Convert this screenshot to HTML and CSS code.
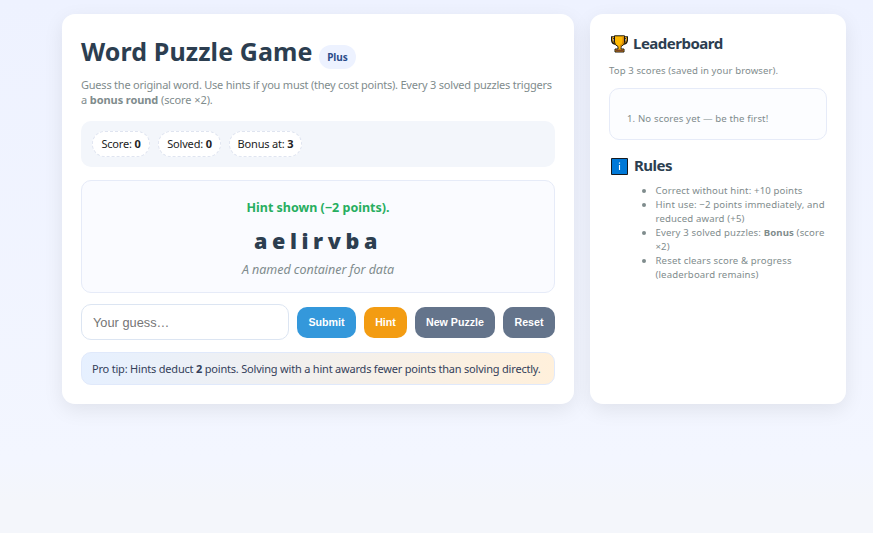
FILE: index.html
```html
<!DOCTYPE html>
<html lang="en">
<head>
<meta charset="utf-8">
<title>Word Puzzle Game</title>
<link rel="stylesheet" href="styles.css">
</head>
<body>
<div class="wrap">
  <main class="card game">
    <header class="title"><h1>Word Puzzle Game</h1><span class="badge">Plus</span></header>
    <p class="intro"><span class="intro-a">Guess the original word. Use hints if you must (they cost points). Every 3 solved puzzles triggers</span><br>a <strong>bonus round</strong> (score ×2).</p>
    <div class="stats">
      <div class="chip chip-score">Score: <strong>0</strong></div>
      <div class="chip chip-solved">Solved: <strong>0</strong></div>
      <div class="chip chip-bonus">Bonus at: <strong>3</strong></div>
    </div>
    <section class="puzzle">
      <div class="message">Hint shown (−2 points).</div>
      <div class="word">aelirvba</div>
      <div class="hint">A named container for data</div>
    </section>
    <div class="controls">
      <input class="guess" type="text" placeholder="Your guess…">
      <button class="btn submit">Submit</button>
      <button class="btn reveal">Hint</button>
      <button class="btn next">New Puzzle</button>
      <button class="btn reset">Reset</button>
    </div>
    <div class="tip">Pro tip: Hints deduct <strong>2</strong> points. Solving with a hint awards fewer points than solving directly.</div>
  </main>
  <aside class="card side">
    <h2><svg class="icon" width="17" height="18" viewBox="0 0 17 18"><path d="M4 2.500H1.200v3Q1.400 8.600 5 8.800M13 2.500h2.800v3Q15.600 8.600 12 8.800" fill="none" stroke="#1b1710" stroke-width="2.400"/><path d="M4 2.500H1.500v3Q1.800 7.800 5 8.200M13 2.500h2.500v3Q15.200 7.800 12 8.200" fill="none" stroke="#d99b16" stroke-width="1"/><path d="M3.500.8h10V7q0 3-3.500 4.500V14h3v3H4v-3h3v-2.500Q3.500 10 3.500 7z" fill="#ffb900" stroke="#1b1710"/><path d="M11.500 1.300H13V7q0 2.500-3.200 4v2.500H8.800V10q2.700-1 2.700-4z" fill="#d98a0b"/><path d="M4.800 14.500h7.400v2H4.800z" fill="#7a4328"/></svg><span class="h2-lead">Leaderboard</span></h2>
    <p class="note">Top 3 scores (saved in your browser).</p>
    <div class="scores">1. No scores yet — be the first!</div>
    <h2 class="h2-second"><svg class="icon" width="17" height="17" viewBox="0 0 17 17"><path d="M.5.5h16v16H.5z" fill="#0078d7" stroke="#151a20"/><path d="M8.500 7v5" stroke="#fff" stroke-width="1.100"/><path d="M7.900 4.500h1.200v1.200H7.900z" fill="#fff"/></svg><span class="h2-rules">Rules</span></h2>
    <ul class="rules">
      <li>Correct without hint: +10 points</li>
      <li>Hint use: −2 points immediately, and<br>reduced award (+5)</li>
      <li>Every 3 solved puzzles: <strong>Bonus</strong> (score<br>×2)</li>
      <li>Reset clears score &amp; progress<br>(leaderboard remains)</li>
    </ul>
  </aside>
</div>
</body>
</html>
```
FILE: styles.css
```css
* { box-sizing: border-box; }
html { height: 100%; overflow: hidden; }
body {
  height: 100%;
  margin: 0;
  padding: 14px 27px 0 62px;
  font-family: "Noto Sans", "Open Sans", sans-serif;
  color: #2c3e50;
  background: linear-gradient(180deg, #eef2ff 0%, #f3f6ff 86%, #f4f6fb 94%, #f4f6fb 100%);
  white-space: nowrap;
}
h1, h2, p, ul { margin: 0; }
.wrap { display: grid; grid-template-columns: 512px 256px; gap: 16px; }
.card {
  height: 390px;
  padding: 19px;
  background: #fff;
  border-radius: 13px;
  box-shadow: 0 6px 20px rgba(0, 0, 0, .08);
}
.title { display: flex; height: 44px; gap: 7px; }
h1 { width: 231px; font-size: 25px; line-height: 37px; letter-spacing: .1px; }
.badge {
  width: 37px; height: 24px; margin-top: 12px;
  border-radius: 12px; background: #edf2ff; color: #2b4c8a;
  font-size: 10px; font-weight: 700; line-height: 25px; text-align: center;
}
.intro { height: 44px; font-size: 11px; line-height: 15px; letter-spacing: -.09px; color: #7f8c8d; }
.intro-a { letter-spacing: -.22px; }
.stats {
  display: flex; gap: 8px; height: 46px; padding: 10px 11px;
  background: #f3f6fb; border-radius: 10px;
}
.chip {
  height: 26px; line-height: 24px; text-align: center; font-size: 11px; letter-spacing: -.18px; color: #222;
  background: #fff; border: 1px dashed #dfe4f0; border-radius: 13px;
}
.chip-score { width: 58px; }
.chip-solved { width: 63px; }
.chip-bonus { width: 73px; }
.puzzle {
  height: 113px; margin-top: 13px; padding-top: 17px; text-align: center;
  background: #fafbff; border: 1px solid #e6ebf8; border-radius: 10px;
}
.message { font-size: 12.500px; line-height: 20px; font-weight: 700; color: #27ae60; }
.word { margin-top: 7px; height: 34px; line-height: 32px; font-size: 21.500px; font-weight: 900; letter-spacing: 4.600px; }
.hint { margin-top: 1px; font-size: 12.500px; line-height: 20px; letter-spacing: -.04px; font-style: italic; color: #7f8c8d; }
.controls { display: flex; align-items: center; gap: 8px; height: 36px; margin-top: 11px; }
.guess {
  width: 208px; height: 36px; padding: 0 11px; border: 1px solid #dce5f2; border-radius: 10px;
  background: #fff; font: 12.800px "Liberation Sans", Arial, sans-serif;
}
.guess::placeholder { color: #757575; }
.btn {
  height: 31px; padding: 0; border: 0; border-radius: 10px; color: #fff;
  font: bold 10.670px "Liberation Sans", Arial, sans-serif;
}
.submit { width: 59px; background: #3498db; }
.reveal { width: 43px; background: #f39c12; }
.next { width: 80px; background: #64748b; }
.reset { width: 52px; background: #64748b; }
.tip {
  height: 33px; margin-top: 12px; padding-left: 10px; line-height: 31px; font-size: 11px; letter-spacing: -.2px; color: #34405a;
  background: linear-gradient(90deg, #e6f0ff, #fff0db); border: 1px solid #e0e9fb; border-radius: 10px;
}
h2 { display: flex; align-items: center; gap: 5px; height: 22px; padding-left: 2px; font-size: 15px; line-height: 20px; }
h2 span { letter-spacing: -.5px; padding-bottom: 2px; }
.icon { display: block; flex: none; }
.note { margin-top: 8px; font-size: 9.600px; line-height: 16px; letter-spacing: .09px; color: #7f8c8d; }
.scores {
  height: 52px; margin-top: 9px; padding: 22px 17px 0; font-size: 9.600px; line-height: 16px; letter-spacing: .13px; color: #7f8c8d;
  background: #fcfdff; border: 1px solid #e6ebf8; border-radius: 10px;
}
.h2-second { margin-top: 15px; gap: 6px; }
.rules { margin-top: 7px; padding-left: 46.500px; list-style: none; font-size: 9.600px; line-height: 14px; letter-spacing: .135px; color: #7f8c8d; }
.rules li::before {
  content: ""; display: inline-block; width: 4px; height: 4px;
  margin: 0 9.500px 1px -13.500px; border-radius: 50%; background: #7f8c8d;
}
```
